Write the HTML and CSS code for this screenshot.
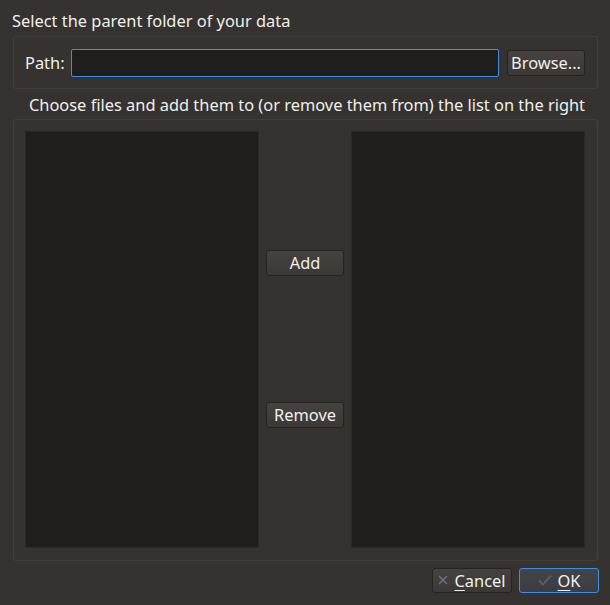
FILE: index.html
```html
<!DOCTYPE html>
<html>
<head>
<meta charset="utf-8">
<link rel="stylesheet" href="styles.css">
</head>
<body>
<div class="dialog">
  <div class="title">Select the parent folder of your data</div>
  <div class="group path-group">
    <span class="path-label">Path:</span>
    <div class="path-input"></div>
    <button class="btn browse">Browse...</button>
  </div>
  <div class="hint">Choose files and add them to (or remove them from) the list on the right</div>
  <div class="group lists-group">
    <div class="list"></div>
    <div class="middle">
      <button class="btn mid-btn">Add</button>
      <button class="btn mid-btn">Remove</button>
    </div>
    <div class="list"></div>
  </div>
  <div class="footer">
    <button class="btn footer-btn cancel">
      <svg class="icon" width="10" height="10" viewBox="0 0 10 10"><path d="M1 1 L9 9 M9 1 L1 9" stroke="#6b6e80" stroke-width="1.6" fill="none"/></svg>
      <span><u>C</u>ancel</span>
    </button>
    <button class="btn footer-btn ok">
      <svg class="icon" width="14" height="12" viewBox="0 0 14 12"><path d="M1 6.5 L5 10.5 L13 1.5" stroke="#5e6170" stroke-width="1.6" fill="none"/></svg>
      <span><u>O</u>K</span>
    </button>
  </div>
</div>
</body>
</html>
```

FILE: styles.css
```css
html, body {
  margin: 0;
  padding: 0;
  background: #35322f;
}

.dialog {
  width: 610px;
  height: 605px;
  box-sizing: border-box;
  display: flex;
  flex-direction: column;
  font-family: "Noto Sans", "DejaVu Sans", sans-serif;
  font-size: 16.4px;
  color: #f0f0ee;
  padding-top: 10px;
}

.title {
  height: 26px;
  line-height: 22px;
  padding-left: 12px;
  box-sizing: border-box;
}

.group {
  margin: 0 12px 0 13px;
  border: 1px solid #423f3b;
  border-radius: 3px;
  box-sizing: border-box;
}

.path-group {
  height: 53px;
  display: flex;
  align-items: center;
  padding: 0 12px 0 11px;
}

.path-label {
  width: 46px;
  flex: none;
}

.path-input {
  flex: 1;
  height: 28px;
  box-sizing: border-box;
  border: 1px solid #3d8ee6;
  border-radius: 2px;
  background: #201e1c;
  margin-right: 8px;
}

.btn {
  font-family: inherit;
  font-size: 16.4px;
  color: #f0f0ee;
  background: linear-gradient(#45423f, #3b3835);
  border: 1px solid #262422;
  border-radius: 3px;
  box-sizing: border-box;
  padding: 0 0 1px 0;
  margin: 0;
  display: flex;
  align-items: center;
  justify-content: center;
}

.browse {
  width: 78px;
  height: 26px;
  flex: none;
}

.hint {
  height: 30px;
  box-sizing: border-box;
  padding: 2px 0 0 4px;
  line-height: 28px;
  text-align: center;
}

.lists-group {
  height: 442px;
  display: grid;
  grid-template-columns: 234px 1fr 234px;
  padding: 11px 12px 12px 11px;
}

.list {
  background: #201e1c;
  border: 1px solid #2b2826;
}

.middle {
  display: flex;
  flex-direction: column;
  align-items: center;
  padding-top: 119px;
  gap: 126px;
}

.mid-btn {
  width: 78px;
  height: 26px;
}

.footer {
  display: flex;
  justify-content: flex-end;
  gap: 7px;
  padding: 7px 11px 0 0;
}

.footer-btn {
  width: 80px;
  height: 25px;
  gap: 6px;
}

.footer-btn u {
  text-underline-offset: 3px;
}

.ok {
  border-color: #3d8ee6;
  background: linear-gradient(#46444b, #3d3b42);
}

.icon {
  flex: none;
}
```
